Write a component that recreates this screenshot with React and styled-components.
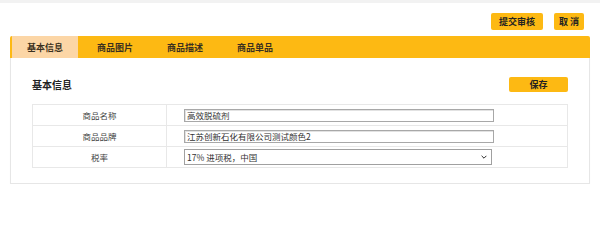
import styled, { createGlobalStyle } from "styled-components"
import { useState } from "react"

const GlobalStyle = createGlobalStyle`
    body {
        margin: 0;
        background: #FFFFFF;
        font-family: "Noto Sans CJK SC", "Noto Sans", sans-serif;
        color: #333333;
    }
`

const tabs = ["基本信息", "商品图片", "商品描述", "商品单品"]

const rows = [
    { label: "商品名称", value: "高效脱硫剂" },
    { label: "商品品牌", value: "江苏创新石化有限公司测试颜色2" },
]

function App() {
    const [active, setActive] = useState(0)

    return (
        <>
            <GlobalStyle />
            <TopStrip />
            <Toolbar>
                <Button width='52'>提交审核</Button>
                <Button width='30'>取 消</Button>
            </Toolbar>
            <TabBar>
                {tabs.map((t, i) => (
                    <Tab key={t} active={i === active} onClick={() => setActive(i)}>
                        {t}
                    </Tab>
                ))}
            </TabBar>
            <Panel>
                <PanelHeader>
                    <Title>基本信息</Title>
                    <Button width='59' height='15'>保存</Button>
                </PanelHeader>
                <Table>
                    <tbody>
                        {rows.map(r => (
                            <tr key={r.label}>
                                <Label>{r.label}</Label>
                                <Cell>
                                    <Input defaultValue={r.value} />
                                </Cell>
                            </tr>
                        ))}
                        <tr>
                            <Label>税率</Label>
                            <Cell>
                                <SelectBox>
                                    <Select defaultValue='17'>
                                        <option value='17'>17% 进项税，中国</option>
                                    </Select>
                                    <Chevron viewBox='0 0 10 6'>
                                        <path d="M1 1 L5 5 L9 1" />
                                    </Chevron>
                                </SelectBox>
                            </Cell>
                        </tr>
                    </tbody>
                </Table>
            </Panel>
        </>
    )
}

const TopStrip = styled.div`
    height: 3px;
    background: #F2F2F2;
`

const Toolbar = styled.div`
    display: flex;
    justify-content: flex-end;
    gap: 11px;
    padding: 10px 16px 6px;
`

const Button = styled.button`
    width: ${p => p.width}px;
    height: ${p => p.height || 17}px;
    padding: 0;
    border: none;
    border-radius: 2px;
    background: #FDB913;
    color: #222222;
    font-family: inherit;
    font-size: 9px;
    font-weight: 700;
    line-height: 1;
    cursor: pointer;
`

const TabBar = styled.div`
    display: flex;
    gap: 4px;
    height: 22px;
    margin: 0 10px;
    padding-left: 2px;
    background: #FDB913;
    border-radius: 2px 2px 0 0;
`

const Tab = styled.div`
    width: 66px;
    display: flex;
    align-items: center;
    justify-content: center;
    font-size: 9px;
    font-weight: 700;
    color: #3A3020;
    background: ${p => p.active ? "#FCD6A6" : "transparent"};
    cursor: pointer;
`

const Panel = styled.div`
    margin: 0 10px;
    padding: 19px 21px 15px;
    border: 1px solid #E6E6E6;
    border-top: none;
    box-shadow: 0 1px 1px rgba(0,0,0,0.04);
`

const PanelHeader = styled.div`
    display: flex;
    align-items: center;
    justify-content: space-between;
    height: 15px;
    margin-bottom: 12px;
    padding-right: 0;
`

const Title = styled.h3`
    margin: 0;
    font-size: 10px;
    font-weight: 700;
    color: #222222;
`

const Table = styled.table`
    width: 100%;
    border-collapse: collapse;
    td {
        border: 1px solid #E8E8E8;
        height: 20px;
        padding: 0;
    }
`

const Label = styled.td`
    width: 133px;
    text-align: center;
    font-size: 8.5px;
    color: #444444;
`

const Cell = styled.td`
    padding-left: 17px !important;
`

const Input = styled.input`
    display: block;
    box-sizing: border-box;
    width: 310px;
    height: 13px;
    padding: 0 2px;
    border: 1px solid #A8A8A8;
    box-shadow: inset 1px 1px 0 #E2E2E2;
    font-family: inherit;
    font-size: 8.5px;
    color: #333333;
    outline: none;
`

const SelectBox = styled.div`
    position: relative;
    width: 308px;
`

const Select = styled.select`
    display: block;
    box-sizing: border-box;
    width: 100%;
    height: 16px;
    padding: 0 2px;
    border: 1px solid #A0A0A0;
    border-radius: 0;
    background: #FFFFFF;
    appearance: none;
    font-family: inherit;
    font-size: 8.5px;
    color: #333333;
    outline: none;
`

const Chevron = styled.svg`
    position: absolute;
    right: 5px;
    top: 6px;
    width: 6px;
    height: 4px;
    fill: none;
    stroke: #222222;
    stroke-width: 1.6;
    pointer-events: none;
`

export default App
